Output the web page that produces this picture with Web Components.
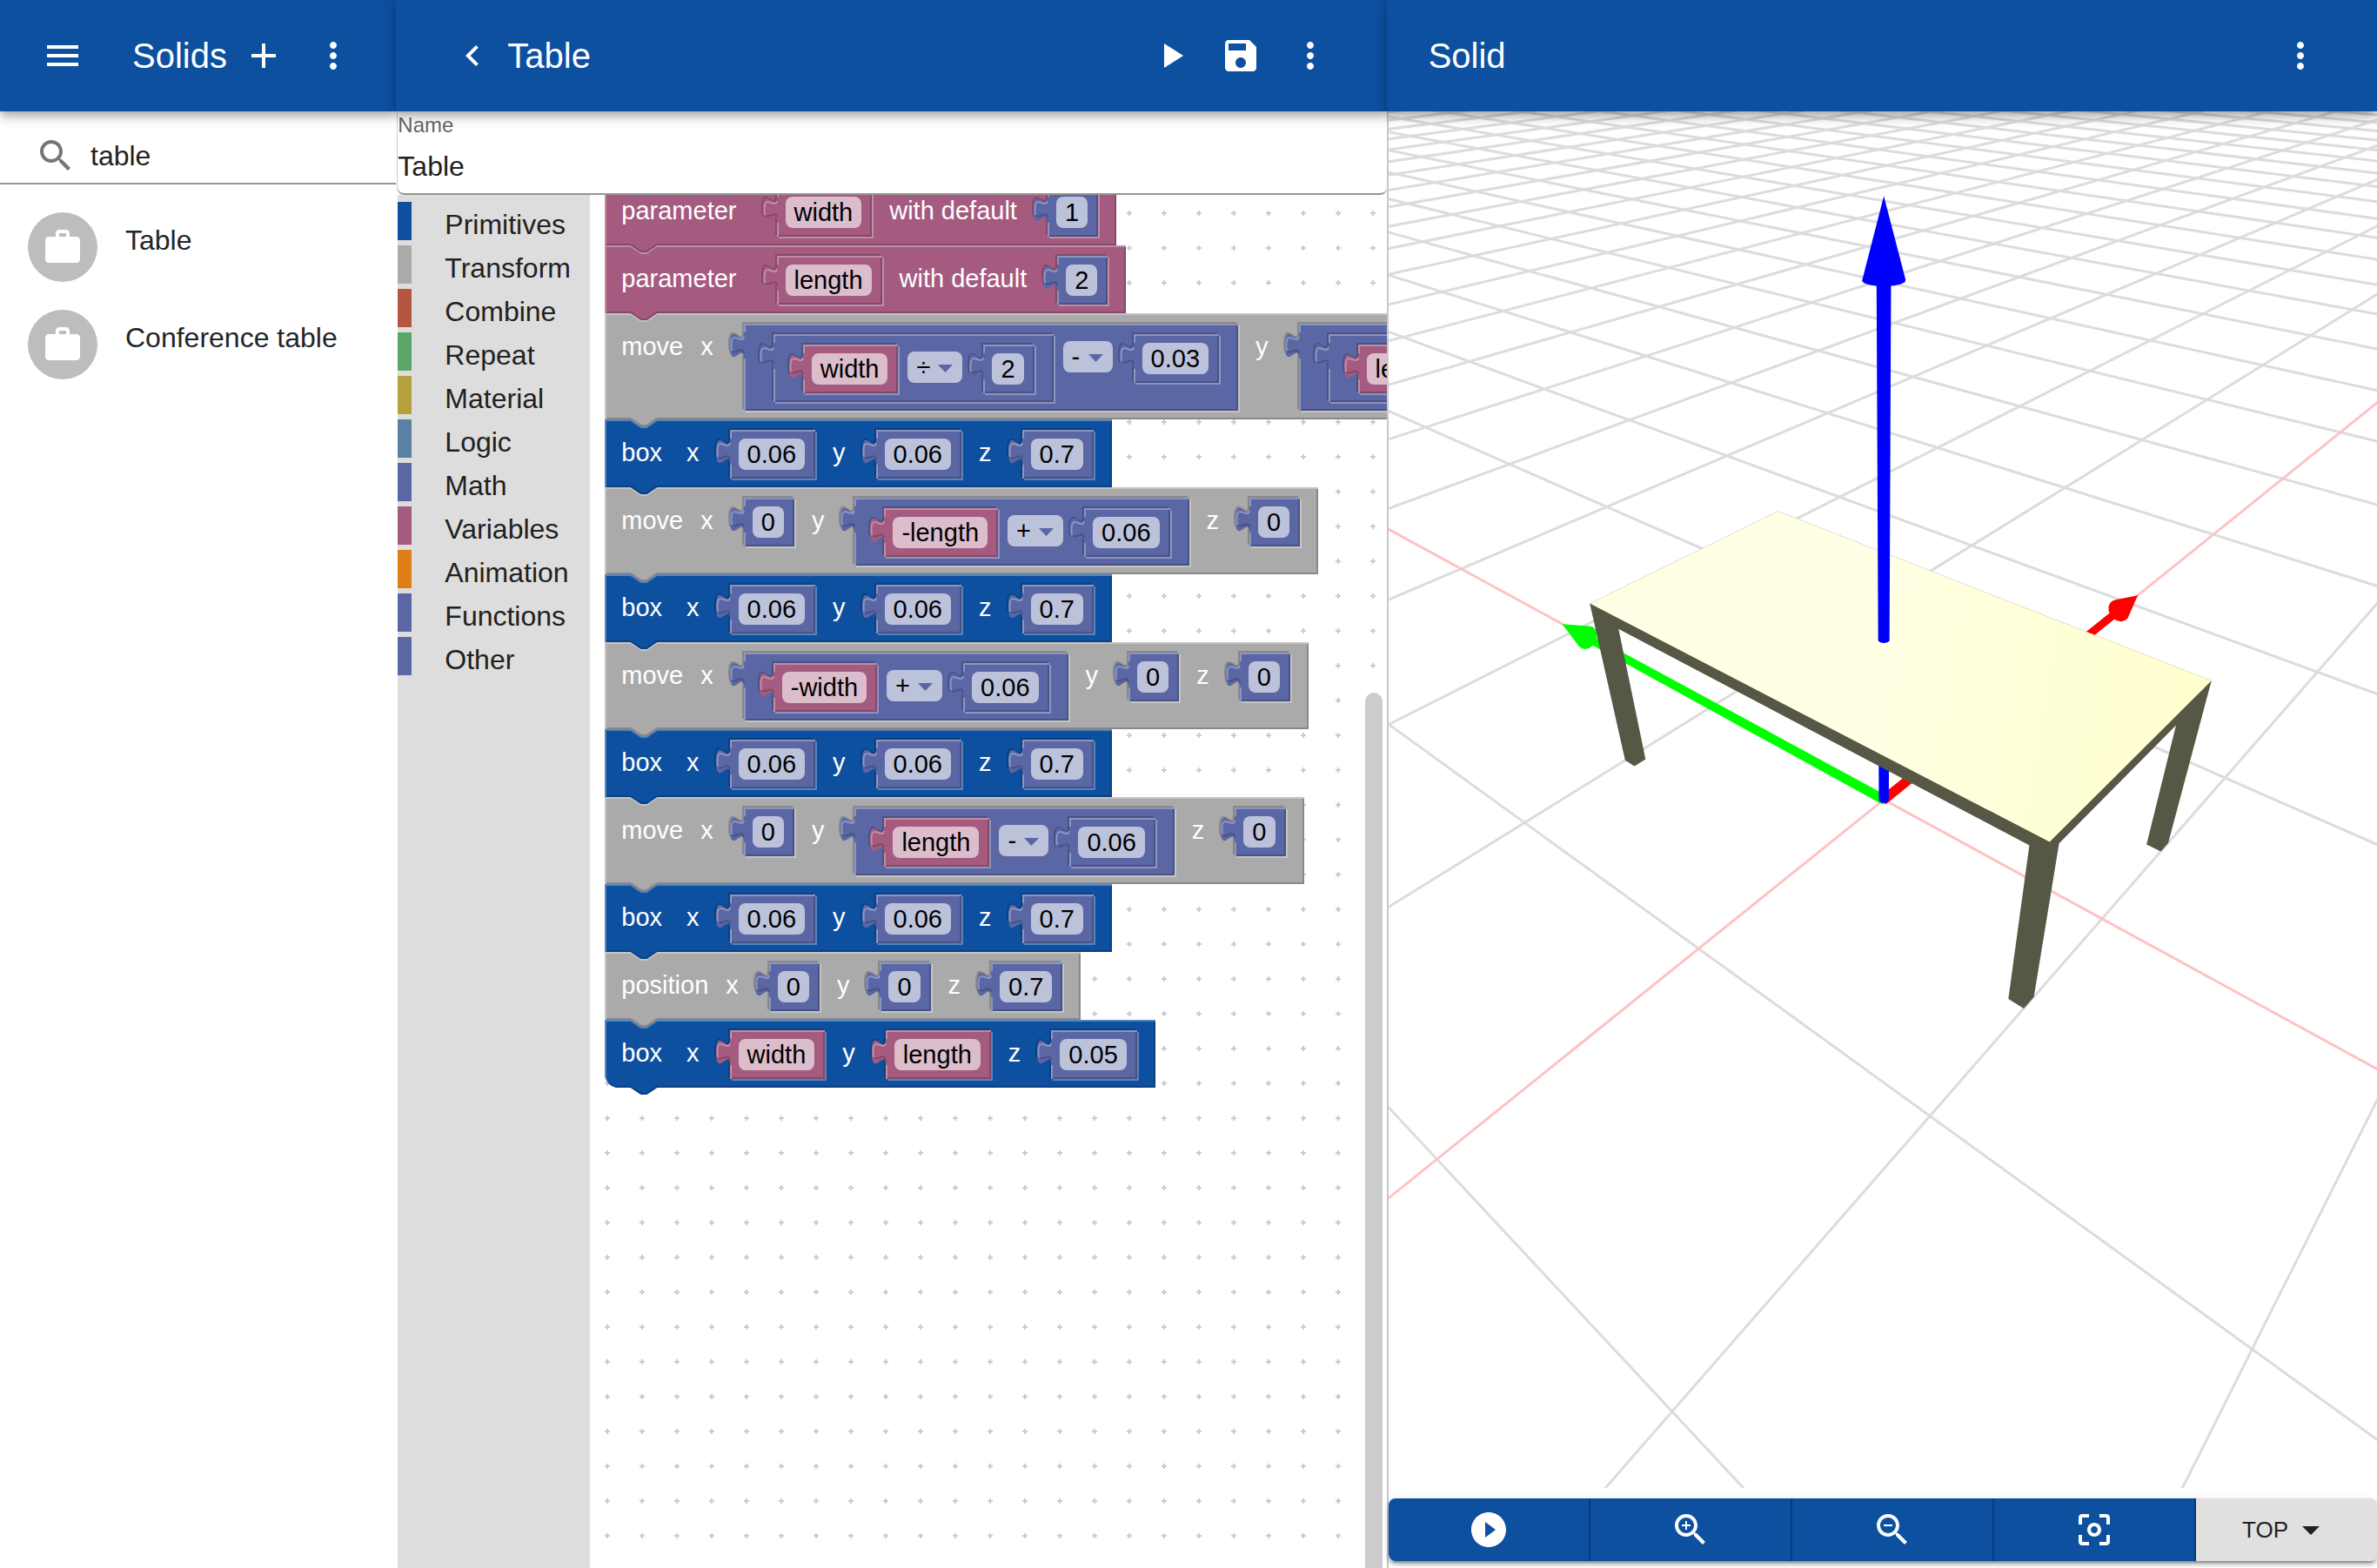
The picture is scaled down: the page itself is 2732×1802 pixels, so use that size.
<!DOCTYPE html>
<html lang="en">
<head>
<meta charset="utf-8">
<meta name="viewport" content="width=device-width, initial-scale=1">
<title>Solids</title>
<style>
  html, body { margin: 0; height: 100%; }
  body {
    font: 32px/48px "Liberation Sans", Helvetica, Arial, sans-serif;
    color: #212121; background: #fff;
    --brand: #0d50a0; --brand-dark: #0a4080; --brand-light: #5684bd;
  }
</style>
</head>
<body>
<solids-app>
  <app-panel slot="list">
    <app-bar slot="bar">
      <icon-button slot="start" icon="menu" label="Open menu" style="margin-right:56px"></icon-button>
      Solids
      <icon-button slot="end" icon="add" label="Add solid"></icon-button>
      <icon-button slot="end" icon="more" label="More options for the list"></icon-button>
    </app-bar>
    <search-field value="table"></search-field>
    <solid-item>Table</solid-item>
    <solid-item>Conference table</solid-item>
  </app-panel>

  <app-panel slot="editor" divided>
    <app-bar slot="bar" wide>
      <icon-button slot="start" icon="back" label="Back" style="margin:0 16px"></icon-button>
      Table
      <icon-button slot="end" icon="play" label="Run"></icon-button>
      <icon-button slot="end" icon="save" label="Save"></icon-button>
      <icon-button slot="end" icon="more" label="More options for the solid"></icon-button>
    </app-bar>
    <name-field value="Table"></name-field>
    <block-editor>
      <block-toolbox slot="toolbox">
        <block-category style="--swatch:#0d50a0">Primitives</block-category>
        <block-category style="--swatch:#aaaaaa">Transform</block-category>
        <block-category style="--swatch:#b5563e">Combine</block-category>
        <block-category style="--swatch:#5ba567">Repeat</block-category>
        <block-category style="--swatch:#b5a03c">Material</block-category>
        <block-category style="--swatch:#5b80a5">Logic</block-category>
        <block-category style="--swatch:#5b67a5">Math</block-category>
        <block-category style="--swatch:#a55b80">Variables</block-category>
        <block-category style="--swatch:#de7f16">Animation</block-category>
        <block-category style="--swatch:#5b67a5">Functions</block-category>
        <block-category style="--swatch:#5b67a5">Other</block-category>
      </block-toolbox>

      <block-statement kind="variable">
        <block-label named>parameter</block-label><block-value kind="variable"><block-field>width</block-field></block-value>
        <block-label>with default</block-label><block-value kind="math"><block-field>1</block-field></block-value>
      </block-statement>
      <block-statement kind="variable">
        <block-label named>parameter</block-label><block-value kind="variable"><block-field>length</block-field></block-value>
        <block-label>with default</block-label><block-value kind="math"><block-field>2</block-field></block-value>
      </block-statement>
      <block-statement kind="transform">
        <block-label>move</block-label>
        <block-label>x</block-label>
        <block-value kind="math" nested>
          <block-value kind="math" nested>
            <block-value kind="variable"><block-field>width</block-field></block-value>
            <block-operator value="÷"></block-operator>
            <block-value kind="math"><block-field>2</block-field></block-value>
          </block-value>
          <block-operator value="-"></block-operator>
          <block-value kind="math"><block-field>0.03</block-field></block-value>
        </block-value>
        <block-label>y</block-label>
        <block-value kind="math" nested>
          <block-value kind="math" nested>
            <block-value kind="variable"><block-field>length</block-field></block-value>
          </block-value>
        </block-value>
      </block-statement>
      <block-statement kind="primitive">
        <block-label wide>box</block-label>
        <block-label>x</block-label><block-value kind="math"><block-field>0.06</block-field></block-value>
        <block-label>y</block-label><block-value kind="math"><block-field>0.06</block-field></block-value>
        <block-label>z</block-label><block-value kind="math"><block-field>0.7</block-field></block-value>
      </block-statement>
      <block-statement kind="transform">
        <block-label>move</block-label>
        <block-label>x</block-label><block-value kind="math"><block-field>0</block-field></block-value>
        <block-label>y</block-label>
        <block-value kind="math" nested>
          <block-value kind="variable"><block-field>-length</block-field></block-value>
          <block-operator value="+"></block-operator>
          <block-value kind="math"><block-field>0.06</block-field></block-value>
        </block-value>
        <block-label>z</block-label><block-value kind="math"><block-field>0</block-field></block-value>
      </block-statement>
      <block-statement kind="primitive">
        <block-label wide>box</block-label>
        <block-label>x</block-label><block-value kind="math"><block-field>0.06</block-field></block-value>
        <block-label>y</block-label><block-value kind="math"><block-field>0.06</block-field></block-value>
        <block-label>z</block-label><block-value kind="math"><block-field>0.7</block-field></block-value>
      </block-statement>
      <block-statement kind="transform">
        <block-label>move</block-label>
        <block-label>x</block-label>
        <block-value kind="math" nested>
          <block-value kind="variable"><block-field>-width</block-field></block-value>
          <block-operator value="+"></block-operator>
          <block-value kind="math"><block-field>0.06</block-field></block-value>
        </block-value>
        <block-label>y</block-label><block-value kind="math"><block-field>0</block-field></block-value>
        <block-label>z</block-label><block-value kind="math"><block-field>0</block-field></block-value>
      </block-statement>
      <block-statement kind="primitive">
        <block-label wide>box</block-label>
        <block-label>x</block-label><block-value kind="math"><block-field>0.06</block-field></block-value>
        <block-label>y</block-label><block-value kind="math"><block-field>0.06</block-field></block-value>
        <block-label>z</block-label><block-value kind="math"><block-field>0.7</block-field></block-value>
      </block-statement>
      <block-statement kind="transform">
        <block-label>move</block-label>
        <block-label>x</block-label><block-value kind="math"><block-field>0</block-field></block-value>
        <block-label>y</block-label>
        <block-value kind="math" nested>
          <block-value kind="variable"><block-field>length</block-field></block-value>
          <block-operator value="-"></block-operator>
          <block-value kind="math"><block-field>0.06</block-field></block-value>
        </block-value>
        <block-label>z</block-label><block-value kind="math"><block-field>0</block-field></block-value>
      </block-statement>
      <block-statement kind="primitive">
        <block-label wide>box</block-label>
        <block-label>x</block-label><block-value kind="math"><block-field>0.06</block-field></block-value>
        <block-label>y</block-label><block-value kind="math"><block-field>0.06</block-field></block-value>
        <block-label>z</block-label><block-value kind="math"><block-field>0.7</block-field></block-value>
      </block-statement>
      <block-statement kind="transform">
        <block-label>position</block-label>
        <block-label>x</block-label><block-value kind="math"><block-field>0</block-field></block-value>
        <block-label>y</block-label><block-value kind="math"><block-field>0</block-field></block-value>
        <block-label>z</block-label><block-value kind="math"><block-field>0.7</block-field></block-value>
      </block-statement>
      <block-statement kind="primitive" last>
        <block-label wide>box</block-label>
        <block-label>x</block-label><block-value kind="variable"><block-field>width</block-field></block-value>
        <block-label>y</block-label><block-value kind="variable"><block-field>length</block-field></block-value>
        <block-label>z</block-label><block-value kind="math"><block-field>0.05</block-field></block-value>
      </block-statement>
    </block-editor>
  </app-panel>

  <app-panel slot="viewer" divided ruled>
    <app-bar slot="bar" wide>
      Solid
      <icon-button slot="end" icon="more" label="More options for the view"></icon-button>
    </app-bar>
    <solid-scene></solid-scene>
    <view-toolbar></view-toolbar>
  </app-panel>
</solids-app>

<script>
const ICONS = {
  menu: 'M3 18h18v-2H3v2zm0-5h18v-2H3v2zm0-7v2h18V6H3z',
  add: 'M19 13h-6v6h-2v-6H5v-2h6V5h2v6h6v2z',
  more: 'M12 8c1.1 0 2-.9 2-2s-.9-2-2-2-2 .9-2 2 .9 2 2 2zm0 2c-1.1 0-2 .9-2 2s.9 2 2 2 2-.9 2-2-.9-2-2-2zm0 6c-1.1 0-2 .9-2 2s.9 2 2 2 2-.9 2-2-.9-2-2-2z',
  back: 'M15.41 7.41L14 6l-6 6 6 6 1.41-1.41L10.83 12z',
  play: 'M8 5v14l11-7z',
  save: 'M17 3H5c-1.11 0-2 .9-2 2v14c0 1.1.89 2 2 2h14c1.1 0 2-.9 2-2V7l-4-4zm-5 16c-1.66 0-3-1.34-3-3s1.34-3 3-3 3 1.34 3 3-1.34 3-3 3zm3-10H5V5h10v4z',
  search: 'M15.5 14h-.79l-.28-.27C15.41 12.59 16 11.11 16 9.5 16 5.91 13.09 3 9.5 3S3 5.91 3 9.5 5.91 16 9.5 16c1.61 0 3.09-.59 4.23-1.57l.27.28v.79l5 4.99L20.49 19l-4.99-5zm-6 0C7.01 14 5 11.99 5 9.5S7.01 5 9.5 5 14 7.01 14 9.5 11.99 14 9.5 14z',
  work: 'M20 6h-4V4c0-1.11-.89-2-2-2h-4c-1.11 0-2 .89-2 2v2H4c-1.11 0-1.99.89-1.99 2L2 19c0 1.11.89 2 2 2h16c1.11 0 2-.89 2-2V8c0-1.11-.89-2-2-2zm-6 0h-4V4h4v2z',
  playCircle: 'M12 2C6.48 2 2 6.48 2 12s4.48 10 10 10 10-4.48 10-10S17.52 2 12 2zm-2 14.5v-9l6 4.5-6 4.5z',
  zoomIn: 'M15.5 14h-.79l-.28-.27C15.41 12.59 16 11.11 16 9.5 16 5.91 13.09 3 9.5 3S3 5.91 3 9.5 5.91 16 9.5 16c1.61 0 3.09-.59 4.23-1.57l.27.28v.79l5 4.99L20.49 19l-4.99-5zm-6 0C7.01 14 5 11.99 5 9.5S7.01 5 9.5 5 14 7.01 14 9.5 11.99 14 9.5 14zm2.5-4h-2v2H9v-2H7V9h2V7h1v2h2v1z',
  zoomOut: 'M15.5 14h-.79l-.28-.27C15.41 12.59 16 11.11 16 9.5 16 5.91 13.09 3 9.5 3S3 5.91 3 9.5 5.91 16 9.5 16c1.61 0 3.09-.59 4.23-1.57l.27.28v.79l5 4.99L20.49 19l-4.99-5zm-6 0C7.01 14 5 11.99 5 9.5S7.01 5 9.5 5 14 7.01 14 9.5 11.99 14 9.5 14zM7 9h5v1H7z',
  focus: 'M5 15H3v4c0 1.1.9 2 2 2h4v-2H5v-4zM5 5h4V3H5c-1.1 0-2 .9-2 2v4h2V5zm14-2h-4v2h4v4h2V5c0-1.1-.9-2-2-2zm0 16h-4v2h4c1.1 0 2-.9 2-2v-4h-2v4zM12 8c-2.21 0-4 1.79-4 4s1.79 4 4 4 4-1.79 4-4-1.79-4-4-4zm0 6c-1.1 0-2-.9-2-2s.9-2 2-2 2 .9 2 2-.9 2-2 2z'
};
const icon = name => `<svg viewBox="0 0 24 24" width="48" height="48" fill="currentColor" aria-hidden="true"><path d="${ICONS[name]}"/></svg>`;

/* Registers an element whose shadow root is filled from a stylesheet and a render function. */
function element(name, css, render, ready) {
  customElements.define(name, class extends HTMLElement {
    constructor() { super(); this.attachShadow({ mode: 'open' }); }
    connectedCallback() {
      const t = document.createElement('template');
      t.innerHTML = `<style>*{box-sizing:border-box}svg{display:block}${css}</style>${render(this)}`;
      this.shadowRoot.replaceChildren(t.content.cloneNode(true));
      if (ready) ready(this);
    }
  });
}

element('solids-app', `
  :host { display: grid; grid-template-columns: 2fr 5fr 5fr; height: 100vh; overflow: hidden; }`,
  () => `<slot name="list"></slot><slot name="editor"></slot><slot name="viewer"></slot>`);

element('app-panel', `
  :host { display: flex; flex-direction: column; min-width: 0; min-height: 0; position: relative; }
  main { flex: 1; min-height: 0; display: flex; flex-direction: column; background: #fff; }
  :host([divided]) main { padding-left: 2px; }
  :host([ruled]) main { padding-left: 0; border-left: 2px solid #c8c8c8; }`,
  () => `<slot name="bar"></slot><main><slot></slot></main>`);

element('app-bar', `
  :host { display: block; position: relative; z-index: 20; flex: none; }
  header {
    display: flex; align-items: center; height: 128px; padding: 0 48px; color: #fff; background: var(--brand);
    box-shadow: 0 4px 8px -2px rgba(0,0,0,.2), 0 8px 10px rgba(0,0,0,.14), 0 2px 20px rgba(0,0,0,.12);
  }
  :host([wide]) header { padding: 0 64px 0 48px; }
  h1 { flex: 1; margin: 0; font-size: 40px; line-height: 64px; font-weight: 400; white-space: nowrap; }
  .end { display: flex; gap: 32px; }`,
  () => `<header><slot name="start"></slot><h1><slot></slot></h1><div class="end"><slot name="end"></slot></div></header>`);

element('icon-button', `
  :host { display: block; }
  button { display: block; padding: 0; border: 0; background: none; color: inherit; cursor: pointer; }`,
  el => `<button type="button" aria-label="${el.getAttribute('label')}">${icon(el.getAttribute('icon'))}</button>`);

element('search-field', `
  :host { display: block; }
  label { display: flex; align-items: center; gap: 16px; height: 84px; padding: 20px 40px 0; border-bottom: 2px solid #949494; color: #757575; }
  input { flex: 1; min-width: 0; padding: 0; border: 0; outline: 0; background: none; font: inherit; color: #212121; }`,
  el => `<label>${icon('search')}<input type="text" aria-label="Search" value="${el.getAttribute('value')}"></label>`);

element('solid-item', `
  :host { display: block; }
  :host(:first-of-type) { margin-top: 16px; }
  a { display: flex; align-items: center; gap: 32px; height: 112px; padding: 0 32px; color: #212529; text-decoration: none; white-space: nowrap; }
  i { display: grid; place-items: center; width: 80px; height: 80px; border-radius: 50%; background: #bdbdbd; color: #fff; }
  span { padding-bottom: 16px; }`,
  () => `<a href="#"><i>${icon('work')}</i><span><slot></slot></span></a>`);

element('name-field', `
  :host { display: block; flex: none; }
  div { height: 96px; padding-top: 2px; border-bottom: 2px solid #949494; border-radius: 0 0 8px 8px; box-shadow: -1px 0 0 #ccc; }
  label { display: block; font-size: 24px; line-height: 28px; color: #666; }
  input { display: block; width: 100%; height: 66px; padding: 0; border: 0; outline: 0; background: none; font: inherit; color: #212121; }`,
  el => `<div><label for="name">Name</label><input id="name" type="text" value="${el.getAttribute('value')}"></div>`);

element('block-editor', `
  :host { display: flex; flex: 1; min-height: 0; }
  .space { position: relative; flex: 1; min-width: 0; overflow: hidden; isolation: isolate; }
  .dots { position: absolute; inset: 0; width: 100%; height: 100%; z-index: -1; }
  .stack { display: flex; flex-direction: column; align-items: flex-start; margin-top: -20px; padding-left: 17px; font-size: 29px; line-height: 36px; white-space: nowrap; }
  .bar { position: absolute; right: 5px; top: 572px; bottom: -20px; width: 20px; border-radius: 10px; background: #ccc; z-index: 30; }`,
  () => `<slot name="toolbox"></slot><div class="space">
    <svg class="dots" aria-hidden="true"><defs><pattern id="p" width="40" height="40" patternUnits="userSpaceOnUse"><path d="M17 21h6M20 18v6" stroke="#ccc" stroke-width="2"/></pattern></defs><rect width="100%" height="100%" fill="url(#p)"/></svg>
    <div class="stack"><slot></slot></div><div class="bar"></div></div>`);

element('block-toolbox', `
  :host { display: block; flex: none; width: 221px; padding-top: 8px; box-sizing: border-box; background: #ddd; }`,
  () => `<nav aria-label="Block categories"><slot></slot></nav>`);

element('block-category', `
  :host { display: block; }
  button { display: flex; gap: 38px; width: 100%; height: 50px; padding: 0; border: 0; background: none; font: inherit; line-height: 52px; color: inherit; text-align: left; cursor: pointer; }
  i { flex: none; width: 16px; height: 44px; background: var(--swatch); }`,
  () => `<button type="button"><i></i><slot></slot></button>`);

/* Fill, highlight, shade and field colours of each kind of block. */
const KINDS = `
  :host([kind=primitive]) { --c: #0d50a0; --light: #5684bd; --dark: #0a4080; }
  :host([kind=transform]) { --c: #aaaaaa; --light: #c4c4c4; --dark: #888888; }
  :host([kind=variable])  { --c: #a55b80; --light: #c08ca6; --dark: #844966; --field: #dbbdcc; }
  :host([kind=math])      { --c: #5b67a5; --light: #8c95c0; --dark: #495284; --field: #bdc2db; }`;

element('block-statement', KINDS + `
  :host { display: block; position: relative; width: max-content; color: #fff; }
  .body {
    display: flex; align-items: flex-start; padding: 12px 21px 10px 19px; background: var(--c);
    box-shadow: inset 2px 2px var(--light), inset -2px -2px var(--dark);
    --pd: var(--dark); --pl: var(--light);
  }
  :host([last]) .body { border-bottom-left-radius: 16px; }
  ::slotted(block-label) { margin-top: 8px; }
  ::slotted(block-label:not(:first-child)) { margin-left: 20px; }
  ::slotted(block-value) { margin-left: 35px; }
  svg { position: absolute; left: 30px; overflow: visible; fill: none; stroke-width: 2; }
  .in { top: 0; stroke: var(--light); }
  .out { top: 100%; }`,
  () => `<div class="body"><slot></slot></div>
    <svg class="in" width="30" height="10" aria-hidden="true"><path d="M0 1L12 9H18L30 1"/></svg>
    <svg class="out" width="30" height="8" aria-hidden="true"><path d="M0 -2H30V0L18 8H12L0 0z" fill="var(--c)"/><path d="M0 -1L12 7H18L30 -1" stroke="var(--dark)"/></svg>`,
  el => { el.style.zIndex = 20 - [...el.parentNode.querySelectorAll('block-statement')].indexOf(el); });

element('block-label', `:host { display: block; } :host([wide]) { margin-right: 8px; } :host([named]) { margin-right: 11px; }`, () => `<slot></slot>`);

element('block-value', KINDS + `
  :host { display: block; position: relative; }
  .body {
    display: flex; align-items: flex-start; padding: 10px 12px 10px 10px; background: var(--c);
    box-shadow: inset 2px 2px var(--light), inset -2px -2px var(--dark), -2px -2px var(--pd), 2px 2px var(--pl);
  }
  :host([nested]) .body { padding: 12px 22px 10px 34px; }
  .inner { display: flex; align-items: flex-start; --pd: var(--dark); --pl: var(--light); }
  svg { position: absolute; left: -18px; top: 0; overflow: visible; fill: none; stroke-width: 2; }`,
  () => `<div class="body"><div class="inner"><slot></slot></div></div>
    <svg width="20" height="42" viewBox="-18 0 20 42" aria-hidden="true">
      <path d="M-1 9c0 20-16-16-16 15 0 8 2 10 4 10" stroke="var(--pd)"/>
      <path d="M-13 42C-7 42 0 30 1 41" stroke="none"/>
      <path d="M2 10H0c0 20-16-16-16 15s16-5 16 15h2z" fill="var(--c)"/>
      <path d="M0 15c-1 6-7 1-11 1-4 0-4 10-3 15" stroke="var(--light)"/>
      <path d="M-13 32C-8 35-2 25 0 34" stroke="var(--dark)"/>
    </svg>`);

element('block-field', `
  :host { display: block; }
  button { display: block; height: 36px; padding: 0 10px; border: 0; border-radius: 8px; background: var(--field); color: #000; font: inherit; line-height: 36px; cursor: text; }`,
  () => `<button type="button"><slot></slot></button>`);

element('block-operator', `
  :host { display: block; position: relative; margin: 8px 24px 0 11px; }
  select { display: block; appearance: none; height: 36px; padding: 0 37px 0 10px; border: 0; border-radius: 8px; background: var(--field); color: #000; font: inherit; line-height: 36px; }
  svg { position: absolute; right: 11px; top: 15px; pointer-events: none; }`,
  el => `<select aria-label="Operator"><option>${el.getAttribute('value')}</option></select>
    <svg width="17" height="9" viewBox="0 0 34 18" aria-hidden="true"><path d="M0 0H34L17 18z" fill="#5b67a5"/></svg>`);

element('view-toolbar', `
  :host { display: block; flex: none; padding: 12px 0 8px; }
  div { display: flex; height: 72px; border-radius: 8px; overflow: hidden; }
  section { border-radius: 8px; box-shadow: 0 6px 2px -4px rgba(0,0,0,.2), 0 4px 4px rgba(0,0,0,.24), 0 2px 10px rgba(0,0,0,.12); }
  button { flex: 1; display: grid; place-items: center; padding: 0; border: 0; border-right: 2px solid #0a3a78; background: var(--brand); color: #fff; cursor: pointer; }
  label { position: relative; display: block; width: 208px; background: #e0e0e0; color: #212121; }
  select { appearance: none; width: 100%; height: 100%; padding: 0 0 0 53px; border: 0; background: none; font: inherit; font-size: 26px; color: inherit; }
  label svg { position: absolute; right: 66px; top: 32px; pointer-events: none; }`,
  () => `<section><div>
    <button type="button" aria-label="Play">${icon('playCircle')}</button>
    <button type="button" aria-label="Zoom in">${icon('zoomIn')}</button>
    <button type="button" aria-label="Zoom out">${icon('zoomOut')}</button>
    <button type="button" aria-label="Fit to view">${icon('focus')}</button>
    <label><select aria-label="View from"><option>TOP</option></select><svg width="20" height="10" aria-hidden="true"><path d="M0 0H20L10 10z" fill="#212121"/></svg></label>
  </div></section>`);

/* Perspective camera that looks at the origin, z up. */
const CAMERA = { dist: 3.952, focal: 1129, side: 0.6358, away: 0.7718, sin: 0.6628, cos: 0.7488 };
function project([x, y, z]) {
  const { dist, focal, side, away, sin, cos } = CAMERA;
  const lateral = x * side - y * away, back = x * away + y * side;
  const depth = dist + back * cos - z * sin;
  return { x: focal * lateral / depth, y: -focal * (back * sin + z * cos) / depth, depth };
}
const fmt = ps => ps.map(p => p.x.toFixed(1) + ',' + p.y.toFixed(1)).join(' ');
function hull(points) {
  const ps = points.map(project).sort((a, b) => a.x - b.x || a.y - b.y);
  const cross = (o, a, b) => (a.x - o.x) * (b.y - o.y) - (a.y - o.y) * (b.x - o.x);
  const half = list => {
    const out = [];
    for (const p of list) {
      while (out.length > 1 && cross(out[out.length - 2], out[out.length - 1], p) <= 0) out.pop();
      out.push(p);
    }
    out.pop();
    return out;
  };
  return fmt([...half(ps), ...half([...ps].reverse())]);
}
const polygon = (points, fill) => `<polygon points="${points}" fill="${fill}"/>`;
function box(x0, x1, y0, y1, z0, z1, fill) {
  const pts = [];
  for (const x of [x0, x1]) for (const y of [y0, y1]) for (const z of [z0, z1]) pts.push([x, y, z]);
  return polygon(hull(pts), fill);
}
function ring(axis, at, r) {
  const pts = [];
  for (let i = 0; i < 16; i++) {
    const p = [0, 0, 0], a = i * Math.PI / 8;
    p[axis] = at; p[(axis + 1) % 3] = r * Math.cos(a); p[(axis + 2) % 3] = r * Math.sin(a);
    pts.push(p);
  }
  return pts;
}
const shaft = (axis, from, to, fill) => polygon(hull([...ring(axis, from, 0.02), ...ring(axis, to, 0.02)]), fill);
function head(axis, fill) {
  const tip = [0, 0, 0]; tip[axis] = 2.1;
  return polygon(hull([tip, ...ring(axis, 1.9, 0.06)]), fill);
}
function groundLine(alongX, k, color, width) {
  /* Cut the line where it passes behind the camera. */
  const slope = (alongX ? CAMERA.away : CAMERA.side) * CAMERA.cos;
  const fixed = k * (alongX ? CAMERA.side : CAMERA.away) * CAMERA.cos;
  const start = Math.max(-60, (0.3 - CAMERA.dist - fixed) / slope);
  if (start > 60) return '';
  const at = t => project(alongX ? [t, k, 0] : [k, t, 0]);
  const a = at(start), b = at(60);
  return `<line x1="${a.x.toFixed(1)}" y1="${a.y.toFixed(1)}" x2="${b.x.toFixed(1)}" y2="${b.y.toFixed(1)}" stroke="${color}" stroke-width="${width}"/>`;
}
function drawScene() {
  const WOOD = '#575745';
  let s = '';
  for (let k = -60; k <= 60; k++) if (k) s += groundLine(true, k, '#dcdcdc', 3) + groundLine(false, k, '#dcdcdc', 3);
  s += groundLine(true, 0, '#ffc2c2', 3) + groundLine(false, 0, '#ffc2c2', 3);
  s += shaft(0, 0, 1.9, '#f00') + head(0, '#f00');
  s += shaft(1, 0, 1.9, '#0f0') + head(1, '#0f0');
  s += shaft(2, 0, 0.75, '#00f');
  for (const [x, y] of [[0.44, 0.94], [0.44, -1], [-0.5, 0.94], [-0.5, -1]]) s += box(x, x + 0.06, y, y + 0.06, 0, 0.7, WOOD);
  s += box(-0.5, 0.5, -1, 1, 0.7, 0.75, WOOD);
  const top = [[-0.5, -1], [0.5, -1], [0.5, 1], [-0.5, 1]].map(([x, y]) => project([x, y, 0.75]));
  s += polygon(fmt(top), 'url(#wood)');
  s += shaft(2, 0.75, 1.9, '#00f') + head(2, '#00f');
  return s;
}
element('solid-scene', `
  :host { display: block; flex: 1; min-height: 0; }
  svg { width: 100%; height: 100%; }`,
  () => `<svg viewBox="-569 -791 1136 1582" preserveAspectRatio="xMidYMid slice" role="img" aria-label="Table in perspective">
    <defs><linearGradient id="wood" gradientUnits="userSpaceOnUse" x1="-190" y1="-60" x2="340" y2="30">
      <stop offset="0" stop-color="#ffffe6"/><stop offset=".25" stop-color="#ffffe6"/><stop offset=".6" stop-color="#ffffd9"/><stop offset="1" stop-color="#ffffcf"/></linearGradient></defs>
    ${drawScene()}</svg>`);
</script>
</body>
</html>
